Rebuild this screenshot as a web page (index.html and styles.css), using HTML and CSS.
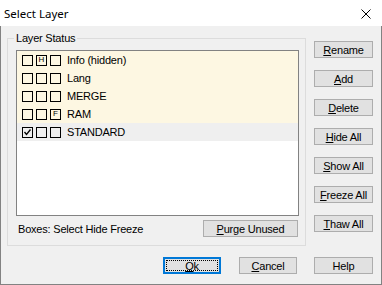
FILE: index.html
```html
<!DOCTYPE html>
<html lang="en">
<head>
    <meta charset="UTF-8">
    <title>Select Layer</title>
    <link rel="stylesheet" href="styles.css">
</head>
<body>
    <div class="window">
        <div class="titlebar">
            <span class="title">Select Layer</span>
            <svg class="close" width="10" height="10" viewBox="0 0 10 10">
                <path d="M0.5 0.5 L9.5 9.5 M9.5 0.5 L0.5 9.5" stroke="#000" stroke-width="1"/>
            </svg>
        </div>

        <div class="client">
            <div class="main">
                <fieldset class="group">
                    <legend>Layer Status</legend>
                    <ul class="layer-list">
                        <li class="layer unused">
                            <span class="box"></span><span class="box">H</span><span class="box"></span>
                            <span class="name">Info (hidden)</span>
                        </li>
                        <li class="layer unused">
                            <span class="box"></span><span class="box"></span><span class="box"></span>
                            <span class="name">Lang</span>
                        </li>
                        <li class="layer unused">
                            <span class="box"></span><span class="box"></span><span class="box"></span>
                            <span class="name">MERGE</span>
                        </li>
                        <li class="layer unused">
                            <span class="box"></span><span class="box"></span><span class="box">F</span>
                            <span class="name">RAM</span>
                        </li>
                        <li class="layer current">
                            <span class="box">
                                <svg width="9" height="9" viewBox="0 0 9 9">
                                    <path d="M1.5 4 L3.5 6.5 L7.5 1.5" fill="none" stroke="#000" stroke-width="1.3"/>
                                </svg>
                            </span><span class="box"></span><span class="box"></span>
                            <span class="name">STANDARD</span>
                        </li>
                    </ul>
                    <div class="group-footer">
                        <span class="hint">Boxes: Select Hide Freeze</span>
                        <button class="btn purge"><u>P</u>urge Unused</button>
                    </div>
                </fieldset>

                <div class="side-buttons">
                    <button class="btn"><u>R</u>ename</button>
                    <button class="btn"><u>A</u>dd</button>
                    <button class="btn"><u>D</u>elete</button>
                    <button class="btn"><u>H</u>ide All</button>
                    <button class="btn"><u>S</u>how All</button>
                    <button class="btn"><u>F</u>reeze All</button>
                    <button class="btn"><u>T</u>haw All</button>
                </div>
            </div>

            <div class="bottom-buttons">
                <button class="btn default"><u>O</u>k</button>
                <button class="btn cancel"><u>C</u>ancel</button>
                <button class="btn help">Help</button>
            </div>
        </div>
    </div>
</body>
</html>
```

FILE: styles.css
```css
* {
    box-sizing: border-box;
}

body {
    margin: 0;
    font-family: "Liberation Sans", Arial, sans-serif;
    font-size: 11px;
    letter-spacing: -0.2px;
    color: #000;
}

.window {
    width: 382px;
    height: 285px;
    display: flex;
    flex-direction: column;
    background: #f0f0f0;
}

.titlebar {
    height: 26px;
    background: #fff;
    display: flex;
    align-items: center;
    justify-content: space-between;
    padding: 0 11px 0 4px;
}

.title {
    font-family: "Noto Sans", sans-serif;
    font-size: 11.5px;
    letter-spacing: 0;
}

.close {
    display: block;
    margin-top: 1px;
}

.client {
    flex: 1;
    border: 1px solid #828282;
    border-top: none;
    display: flex;
    flex-direction: column;
    padding: 0 8px 0 6px;
}

.main {
    display: flex;
    gap: 8px;
}

.group {
    width: 299px;
    margin: 6px 0 0 0;
    padding: 0 6px 8px 8px;
    border: 1px solid #dcdcdc;
}

.group legend {
    margin-left: -2px;
    padding: 0 2px;
    line-height: 13px;
}

.layer-list {
    list-style: none;
    margin: 5px 0 0 0;
    padding: 0;
    height: 166px;
    background: #fff;
    border: 1px solid #828282;
}

.layer {
    height: 18px;
    display: flex;
    align-items: center;
    gap: 3px;
    padding-left: 5px;
}

.layer.unused {
    background: #fdf7e2;
}

.layer.current {
    background: #efefef;
}

.box {
    width: 11px;
    height: 11px;
    border: 1px solid #000;
    display: flex;
    align-items: center;
    justify-content: center;
    font-size: 8px;
    line-height: 8px;
    letter-spacing: 0;
}

.box svg {
    display: block;
}

.name {
    margin-left: 3px;
}

.group-footer {
    display: flex;
    align-items: center;
    justify-content: space-between;
    margin-top: 4px;
    padding-left: 2px;
}

.btn {
    height: 17px;
    width: 59px;
    padding: 0;
    background: #e1e1e1;
    border: 1px solid #adadad;
    font-family: "Liberation Sans", Arial, sans-serif;
    font-size: 11px;
    letter-spacing: -0.2px;
    color: #000;
}

.btn.purge {
    width: 95px;
    margin-right: 1px;
}

.side-buttons {
    display: flex;
    flex-direction: column;
    gap: 12px;
    margin-top: 15px;
}

.bottom-buttons {
    display: flex;
    justify-content: flex-end;
    margin-top: 11px;
}

.bottom-buttons .btn {
    width: 58px;
}

.bottom-buttons .btn.help {
    width: 59px;
}

.btn.default {
    border-color: #0078d7;
    box-shadow: inset 0 0 0 1px #0078d7;
    outline: 1px dotted #000;
    outline-offset: -4px;
}

.btn.cancel {
    margin-left: 18px;
}

.btn.help {
    margin-left: 17px;
}
```
